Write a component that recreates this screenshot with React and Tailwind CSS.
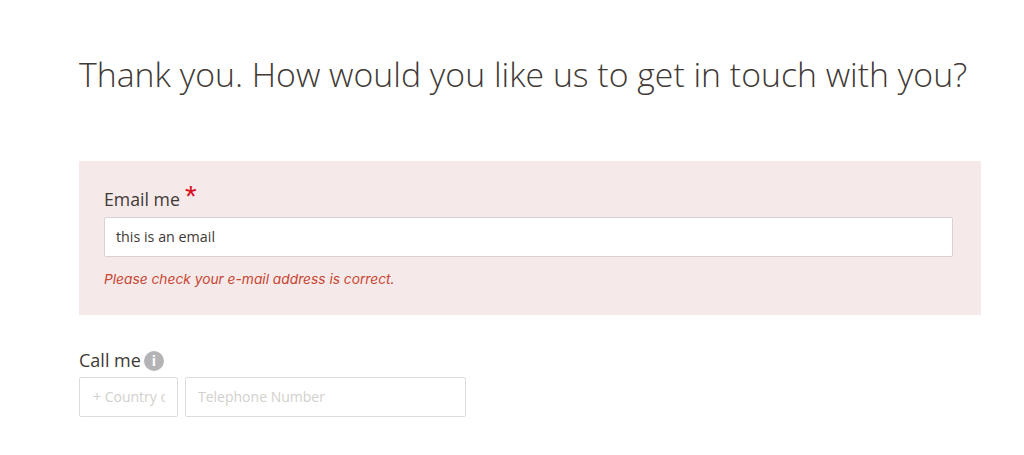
const App = () => (
  <div className="w-[1024px] h-[455px] bg-white overflow-hidden pl-[79px] pt-[52px] font-['Open_Sans',sans-serif] text-[#3f3a36]">
    {/* heading */}
    <h1 className="text-[33.8px] leading-[44px] font-light whitespace-nowrap">
      Thank you. How would you like us to get in touch with you?
    </h1>

    {/* email panel with error */}
    <div className="mt-[65px] w-[902px] h-[154px] bg-[#f5e9ea] px-[25px] pt-[24px]">
      <label className="flex h-[32px] items-start text-[17.7px] leading-[28px]">
        Email me
        <span className="ml-[5px] -mt-[3px] text-[30px] leading-[28px] text-[#d90f1c] font-['Liberation_Sans',sans-serif]">*</span>
      </label>
      <input
        readOnly
        value="this is an email"
        className="block w-[849px] h-[40px] bg-white border border-[#d8d2d2] rounded-[2px] pl-[11px] pr-3 pb-[2px] text-[14.3px] outline-none"
      />
      <p className="mt-[12px] text-[13.75px] leading-[20px] italic text-[#c8452f] font-['Inter',sans-serif]">
        Please check your e-mail address is correct.
      </p>
    </div>

    {/* phone */}
    <div className="mt-[32px] flex items-center gap-[3px] h-[26px]">
      <span className="text-[18px] leading-[26px]">Call me</span>
      <span className="flex w-[20px] h-[20px] mt-[2px] items-center justify-center rounded-full bg-[#b4b4b6] text-white text-[14px] font-bold leading-none">i</span>
    </div>
    <div className="mt-[4px] flex gap-[7px]">
      <input
        placeholder="+ Country code"
        className="w-[99px] h-[40px] border border-[#dcdcdc] rounded-[2px] pl-[13px] pr-3 pb-[1px] text-[14px] outline-none placeholder:text-[#d2d0cc]"
      />
      <input
        placeholder="Telephone Number"
        className="w-[281px] h-[40px] border border-[#dcdcdc] rounded-[2px] px-3 pb-[1px] text-[14px] outline-none placeholder:text-[#d2d0cc]"
      />
    </div>
  </div>
);

export default App;
